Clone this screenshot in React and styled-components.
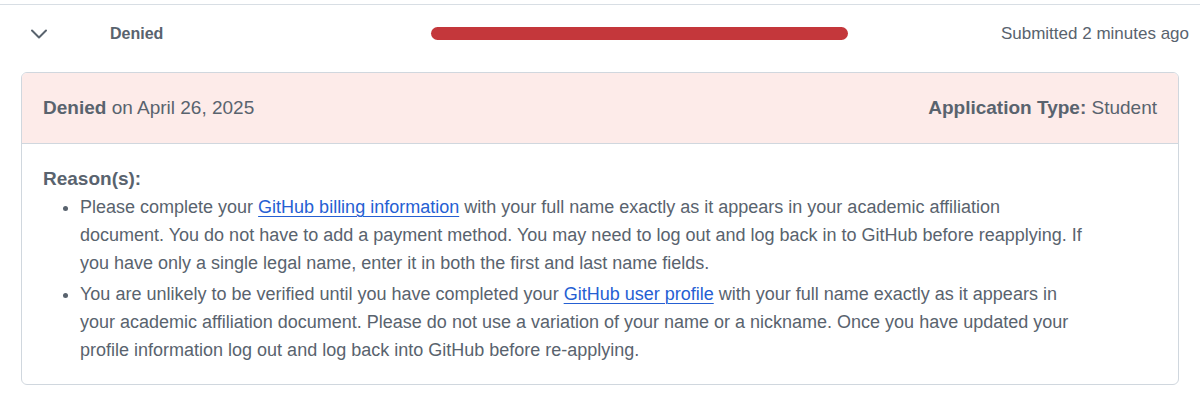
import React from "react";
import styled, { createGlobalStyle } from "styled-components";
import { ChevronDown } from "lucide-react";

const Global = createGlobalStyle`
  html, body { margin: 0; padding: 0; background: #ffffff; }
  body { font-family: "Liberation Sans", Arial, sans-serif; color: #59636e; }
  * { box-sizing: border-box; }
`;

const Page = styled.div`
  padding-top: 4px;
  width: 1200px;
`;

const Section = styled.section`
  border-top: 1px solid #d8dee4;
`;

const SummaryRow = styled.div`
  display: flex;
  align-items: center;
  height: 57px;
  padding: 0 11px 0 25px;
  font-size: 17px;
`;

const Toggle = styled.button`
  display: flex;
  align-items: center;
  justify-content: center;
  width: 28px;
  height: 28px;
  padding: 0;
  border: none;
  background: none;
  color: #59636e;
  cursor: pointer;
`;

const StatusLabel = styled.span`
  width: 321px;
  margin-left: 57px;
  font-weight: 700;
  font-size: 16px;
  color: #59636e;
`;

const StatusBar = styled.div`
  width: 417px;
  height: 13px;
  border-radius: 7px;
  background: ${(p) => p.$color};
`;

const Submitted = styled.span`
  margin-left: auto;
  color: #59636e;
`;

const Card = styled.div`
  margin: 10px 21px 0;
  border: 1px solid #d0d7de;
  border-radius: 6px;
  overflow: hidden;
`;

const CardHeader = styled.div`
  display: flex;
  align-items: center;
  justify-content: space-between;
  height: 71px;
  padding: 0 21px;
  background: #fdebe9;
  border-bottom: 1px solid #d0d7de;
  font-size: 19px;
`;

const Strong = styled.strong`
  font-weight: 700;
`;

const CardBody = styled.div`
  padding: 21px 21px 20px;
  font-size: 18px;
  line-height: 28px;
`;

const ReasonTitle = styled.div`
  font-weight: 700;
  font-size: 19px;
`;

const ReasonList = styled.ul`
  margin: 0;
  padding-left: 37px;
  max-width: 1042px;
`;

const ReasonItem = styled.li`
  & + & {
    margin-top: 3px;
  }
`;

const Link = styled.a`
  color: #2560d3;
  text-decoration: underline;
  text-decoration-thickness: 1px;
  text-underline-offset: 3px;
`;

export default function App() {
  return (
    <Page>
      <Global />
      <Section>
        <SummaryRow>
          <Toggle aria-label="Collapse">
            <ChevronDown size={28} strokeWidth={1.7} />
          </Toggle>
          <StatusLabel>Denied</StatusLabel>
          <StatusBar $color="#c4373b" />
          <Submitted>Submitted 2 minutes ago</Submitted>
        </SummaryRow>
        <Card>
          <CardHeader>
            <span>
              <Strong>Denied</Strong> on April 26, 2025
            </span>
            <span>
              <Strong>Application Type:</Strong> Student
            </span>
          </CardHeader>
          <CardBody>
            <ReasonTitle>Reason(s):</ReasonTitle>
            <ReasonList>
              <ReasonItem>
                Please complete your <Link href="#">GitHub billing information</Link> with your
                full name exactly as it appears in your academic affiliation document. You do not
                have to add a payment method. You may need to log out and log back in to GitHub
                before reapplying. If you have only a single legal name, enter it in both the first
                and last name fields.
              </ReasonItem>
              <ReasonItem>
                You are unlikely to be verified until you have completed your{" "}
                <Link href="#">GitHub user profile</Link> with your full name exactly as it appears
                in your academic affiliation document. Please do not use a variation of your name
                or a nickname. Once you have updated your profile information log out and log back
                into GitHub before re-applying.
              </ReasonItem>
            </ReasonList>
          </CardBody>
        </Card>
      </Section>
    </Page>
  );
}
